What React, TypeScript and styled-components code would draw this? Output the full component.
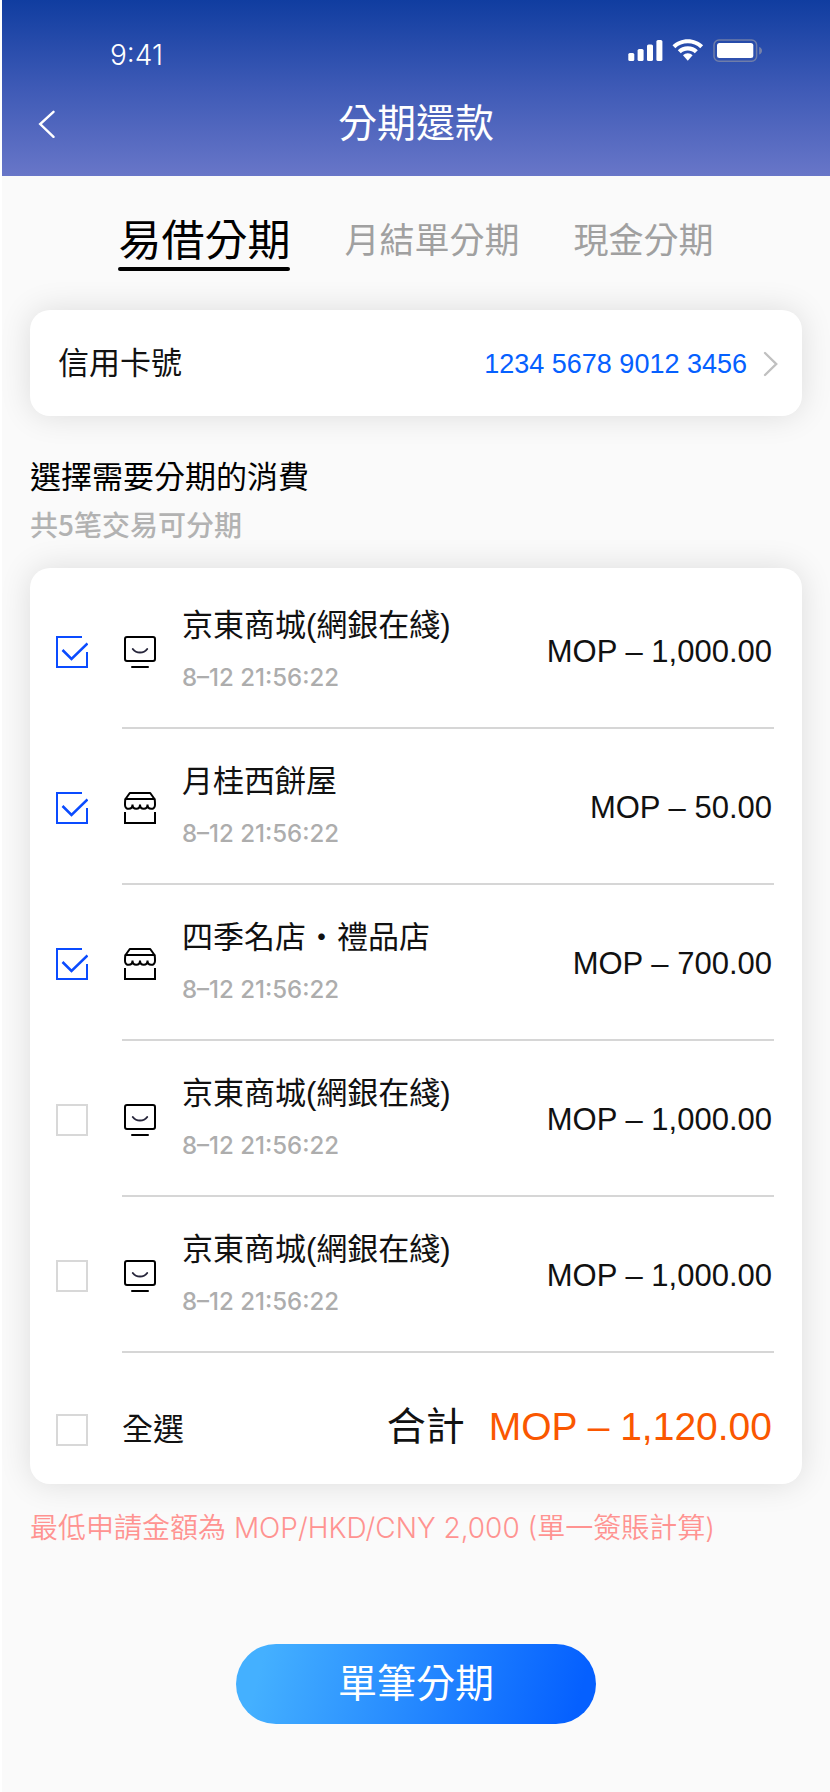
import React, { useState } from "react";
import styled, { createGlobalStyle } from "styled-components";

const GlobalStyle = createGlobalStyle`
  *, *::before, *::after { box-sizing: border-box; }
  body {
    margin: 0;
    background: #ffffff;
    font-family: "Liberation Sans", "Noto Sans CJK TC", sans-serif;
    font-weight: 400;
    color: #111111;
  }
  h1, h2, p, ul { margin: 0; padding: 0; font-weight: inherit; }
  button { font: inherit; border: 0; padding: 0; background: none; cursor: pointer; }
`;

const Screen = styled.div`
  min-height: 100vh;
  margin-left: 2px;
  background: #fafafa;
`;

const Header = styled.header`
  background: linear-gradient(180deg, #103da0 0%, #3e5ab6 50%, #6876c8 100%);
  color: #ffffff;
`;

const StatusBar = styled.div`
  display: flex;
  justify-content: space-between;
  height: 72px;
  padding: 36px 67px 0 108px;
`;

const Clock = styled.span`
  font-family: Inter, sans-serif;
  font-size: 28px;
  line-height: 38px;
  font-weight: 300;
`;

const NavBar = styled.div`
  display: grid;
  grid-template-columns: 64px 1fr 64px;
  align-items: center;
  height: 104px;
  padding: 0 13px;
`;

const BackButton = styled.button`
  display: grid;
  place-items: center;
  height: 64px;
  color: inherit;
`;

const Title = styled.h1`
  text-align: center;
  font-size: 39px;
  line-height: 52px;
`;

const Main = styled.main`
  padding: 0 28px 68px;
`;

const Tabs = styled.nav`
  display: flex;
  justify-content: center;
  align-items: center;
  gap: 54px;
  height: 134px;
`;

const Tab = styled.button<{ $active: boolean }>`
  color: ${(p) => (p.$active ? "#000000" : "#a0a0a0")};
  font-size: ${(p) => (p.$active ? 43 : 35)}px;
  line-height: 52px;
  white-space: nowrap;
`;

const TabLabel = styled.span<{ $active: boolean }>`
  display: block;
  &::after {
    content: "";
    display: block;
    height: 4px;
    border-radius: 2px;
    background: ${(p) => (p.$active ? "#000000" : "transparent")};
  }
`;

const Card = styled.section`
  background: #ffffff;
  border-radius: 20px;
  box-shadow: 0 0 32px rgba(0, 0, 0, 0.12);
`;

const CardPicker = styled.button`
  display: flex;
  align-items: center;
  width: 100%;
  height: 106px;
  padding: 2px 24px 0 28px;
  text-align: left;
  color: #111111;
`;

const PickerLabel = styled.span`
  flex: 1;
  font-size: 31px;
  line-height: 40px;
`;

const CardNumber = styled.span`
  margin-right: 16px;
  font-size: 27px;
  line-height: 40px;
  color: #0560ff;
`;

const SectionHead = styled.div`
  padding: 40px 0 24px;
`;

const SectionTitle = styled.h2`
  font-size: 31px;
  line-height: 44px;
  color: #000000;
`;

const SectionNote = styled.p`
  margin-top: 4px;
  font-family: "Noto Sans CJK SC", sans-serif;
  font-size: 28px;
  line-height: 40px;
  font-weight: 500;
  color: #b2b2b2;
`;

const List = styled.ul`
  list-style: none;
  padding-top: 5px;
`;

const Row = styled.li`
  display: flex;
  align-items: center;
  gap: 34px;
  height: 156px;
  padding: 2px 28px 0 26px;
`;

const RowBody = styled.label`
  flex: 1;
  align-self: stretch;
  display: flex;
  align-items: center;
  gap: 26px;
  padding: 2px 2px 0;
  border-bottom: 2px solid #d6d6d6;
`;

const Merchant = styled.span`
  flex: 1;
  display: flex;
  flex-direction: column;
  gap: 16px;
  padding-bottom: 4px;
`;

const MerchantName = styled.span`
  font-size: 31px;
  line-height: 40px;
`;

const Time = styled.time`
  font-family: Inter, sans-serif;
  font-size: 24px;
  line-height: 32px;
  font-weight: 500;
  color: #adadad;
`;

const Amount = styled.span`
  font-size: 31px;
  line-height: 40px;
  white-space: nowrap;
`;

const TotalRow = styled.div`
  display: flex;
  align-items: center;
  height: 131px;
  padding: 22px 30px 0 26px;
`;

const SelectAllLabel = styled.label`
  flex: 1;
  padding-left: 34px;
  font-size: 31px;
  line-height: 40px;
`;

const Total = styled.div`
  display: flex;
  gap: 24px;
  padding-bottom: 6px;
  font-size: 39px;
  line-height: 52px;
  white-space: nowrap;
`;

const TotalAmount = styled.output`
  color: #fa5700;
`;

const Notice = styled.p`
  padding-top: 24px;
  font-family: Inter, "Noto Sans CJK TC", sans-serif;
  font-size: 28px;
  line-height: 40px;
  font-weight: 350;
  color: #ff9391;
`;

const SubmitButton = styled.button`
  display: block;
  width: 360px;
  max-width: 100%;
  height: 80px;
  margin: 96px auto 0;
  border-radius: 40px;
  background: linear-gradient(105deg, #44b0ff 8%, #0560ff 94%);
  color: #ffffff;
  font-size: 39px;
  line-height: 52px;
`;

const CheckBox = styled.span`
  display: grid;
  width: 32px;
  height: 32px;
  > * { grid-area: 1 / 1; }
  svg { pointer-events: none; visibility: hidden; }
  input:checked ~ svg { visibility: visible; }
`;

const CheckInput = styled.input`
  appearance: none;
  width: 32px;
  height: 32px;
  margin: 0;
  border: 2px solid #d8d8d8;
  cursor: pointer;
  &:checked { border-color: transparent; }
`;

type CheckProps = { id: string; checked: boolean; onToggle: () => void };

function Check({ id, checked, onToggle }: CheckProps) {
  return (
    <CheckBox>
      <CheckInput id={id} type="checkbox" checked={checked} onChange={onToggle} />
      <svg width="32" height="32" viewBox="0 0 32 32" fill="none" stroke="#0a4bff" aria-hidden="true">
        <path d="M26 1H1V31H31V16" strokeWidth="2" />
        <path d="M6.5 14L15.5 23L31.5 7.5" strokeWidth="2.5" />
      </svg>
    </CheckBox>
  );
}

function OnlineIcon() {
  return (
    <svg width="32" height="32" viewBox="0 0 32 32" fill="none" stroke="#000" strokeWidth="2" strokeLinecap="round" aria-hidden="true">
      <rect x="1" y="1" width="30" height="24" rx="2" />
      <path d="M8.8 13C12.5 17.8 19.5 17.8 23.2 13" stroke="#26253a" />
      <path d="M8 31H24" />
    </svg>
  );
}

function ShopIcon() {
  return (
    <svg width="32" height="32" viewBox="0 0 32 32" fill="none" stroke="#000" strokeWidth="2" aria-hidden="true">
      <path d="M1 20V31H31V20" />
      <path d="M1.5 7L5.8 1H26.2L30.5 7Z" strokeLinejoin="round" />
      <path d="M1.5 7C1 8 1 9 1 13C1 18.2 8.5 18.2 8.5 12.5C8.5 18.2 16 18.2 16 12.5C16 18.2 23.5 18.2 23.5 12.5C23.5 18.2 31 18.2 31 13C31 9 31 8 30.5 7" />
    </svg>
  );
}

function StatusIcons() {
  return (
    <svg width="136" height="28" viewBox="0 0 136 28" fill="#fff" role="img" aria-label="Signal, Wi-Fi, battery">
      <rect x="1.3" y="17" width="6" height="8" rx="1.6" />
      <rect x="10.6" y="13" width="6" height="12" rx="1.6" />
      <rect x="20" y="8.5" width="6" height="16.5" rx="1.6" />
      <rect x="29.4" y="4" width="6" height="21" rx="1.6" />
      <path d="M60.800 3.2C66.800 3.2 72.100 5.6 76.100 9.3L73.300 12.2C70 9.1 65.600 7.3 60.800 7.3C56 7.3 51.600 9.1 48.300 12.2L45.500 9.3C49.500 5.6 54.800 3.2 60.800 3.2Z" />
      <path d="M60.800 10.2C64.700 10.2 68.200 11.7 70.800 14.2L67.800 17.2C66 15.4 63.500 14.4 60.800 14.4C58.100 14.4 55.600 15.4 53.800 17.2L50.800 14.2C53.400 11.7 56.900 10.2 60.800 10.2Z" />
      <path d="M60.800 17.2C62.700 17.2 64.300 18 65.600 19.3L60.800 24.8L56 19.3C57.300 18 58.900 17.2 60.800 17.2Z" />
      <rect x="87" y="4" width="42.6" height="21.3" rx="5" fill="none" stroke="#8088a8" strokeOpacity="0.8" strokeWidth="1.5" />
      <rect x="90" y="7" width="36.3" height="15" rx="2.5" />
      <path d="M132.200 11V18.500C134 17.800 135 16.300 135 14.700C135 13 134 11.600 132.200 11Z" fill="#8088a8" fillOpacity="0.9" />
    </svg>
  );
}

const TABS = ["易借分期", "月結單分期", "現金分期"];

const ITEMS = [
  { name: "京東商城(網銀在綫)", amount: "1,000.00", Icon: OnlineIcon },
  { name: "月桂西餅屋", amount: "50.00", Icon: ShopIcon },
  { name: "四季名店・禮品店", amount: "700.00", Icon: ShopIcon },
  { name: "京東商城(網銀在綫)", amount: "1,000.00", Icon: OnlineIcon },
  { name: "京東商城(網銀在綫)", amount: "1,000.00", Icon: OnlineIcon },
];

export default function App() {
  const [tab, setTab] = useState(0);
  const [picked, setPicked] = useState([true, true, true, false, false]);
  const all = picked.every(Boolean);

  return (
    <>
      <GlobalStyle />
      <Screen>
        <Header>
          <StatusBar>
            <Clock>9:41</Clock>
            <StatusIcons />
          </StatusBar>
          <NavBar>
            <BackButton type="button" aria-label="返回">
              <svg width="18" height="28" viewBox="0 0 18 28" fill="none" stroke="#fff" strokeWidth="2.4" strokeLinecap="round" aria-hidden="true">
                <path d="M15.5 1.8L2.2 14L15.5 26.8" />
              </svg>
            </BackButton>
            <Title>分期還款</Title>
          </NavBar>
        </Header>

        <Main>
          <Tabs>
            {TABS.map((name, i) => (
              <Tab key={name} type="button" $active={i === tab} onClick={() => setTab(i)}>
                <TabLabel $active={i === tab}>{name}</TabLabel>
              </Tab>
            ))}
          </Tabs>

          <Card>
            <CardPicker type="button">
              <PickerLabel>信用卡號</PickerLabel>
              <CardNumber>1234 5678 9012 3456</CardNumber>
              <svg width="15" height="26" viewBox="0 0 15 26" fill="none" stroke="#c0c0c0" strokeWidth="2.4" strokeLinecap="round" aria-hidden="true">
                <path d="M2 2L13.2 13L2 24" />
              </svg>
            </CardPicker>
          </Card>

          <SectionHead>
            <SectionTitle>選擇需要分期的消費</SectionTitle>
            <SectionNote>共5笔交易可分期</SectionNote>
          </SectionHead>

          <Card>
            <List>
              {ITEMS.map(({ name, amount, Icon }, i) => (
                <Row key={i}>
                  <Check
                    id={`item-${i}`}
                    checked={picked[i]}
                    onToggle={() => setPicked(picked.map((v, n) => (n === i ? !v : v)))}
                  />
                  <RowBody htmlFor={`item-${i}`}>
                    <Icon />
                    <Merchant>
                      <MerchantName>{name}</MerchantName>
                      <Time>8–12 21:56:22</Time>
                    </Merchant>
                    <Amount>MOP – {amount}</Amount>
                  </RowBody>
                </Row>
              ))}
            </List>
            <TotalRow>
              <Check id="all" checked={all} onToggle={() => setPicked(picked.map(() => !all))} />
              <SelectAllLabel htmlFor="all">全選</SelectAllLabel>
              <Total>
                <span>合計</span>
                <TotalAmount>MOP – 1,120.00</TotalAmount>
              </Total>
            </TotalRow>
          </Card>

          <Notice>最低申請金額為 MOP/HKD/CNY 2,000 (單一簽賬計算)</Notice>
          <SubmitButton type="button">單筆分期</SubmitButton>
        </Main>
      </Screen>
    </>
  );
}
